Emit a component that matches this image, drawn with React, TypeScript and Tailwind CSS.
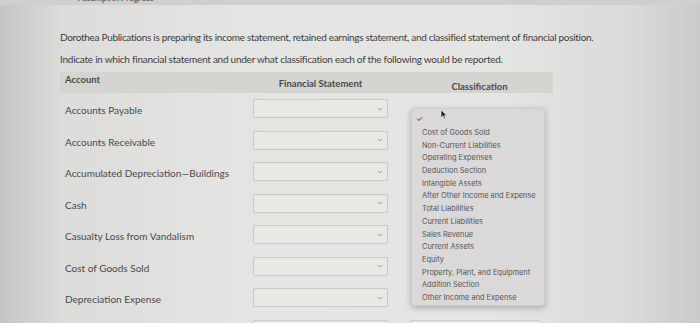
import React from "react";

const accounts = [
  "Accounts Payable",
  "Accounts Receivable",
  "Accumulated Depreciation\u2014Buildings",
  "Cash",
  "Casualty Loss from Vandalism",
  "Cost of Goods Sold",
  "Depreciation Expense",
  "",
];

const options = [
  "Cost of Goods Sold",
  "Non-Current Liabilities",
  "Operating Expenses",
  "Deduction Section",
  "Intangible Assets",
  "After Other Income and Expense",
  "Total Liabilities",
  "Current Liabilities",
  "Sales Revenue",
  "Current Assets",
  "Equity",
  "Property, Plant, and Equipment",
  "Addition Section",
  "Other Income and Expense",
];

function Chevron() {
  return (
    <svg width="6" height="4" viewBox="0 0 6 4" className="shrink-0">
      <path d="M0.8 0.8 L3 3 L5.2 0.8" fill="none" stroke="#9a9a9a" strokeWidth="0.9" />
    </svg>
  );
}

function SelectBox({ w }: { w: string }) {
  return (
    <div className={`${w} h-[19px] border border-[#c9c9c6] bg-[#e8e8e5] rounded-[1px] flex items-center justify-end pr-[4px]`}>
      <Chevron />
    </div>
  );
}

export default function App() {
  return (
    <div
      className="relative w-[700px] h-[323px] overflow-hidden bg-[linear-gradient(90deg,#c4c4c2_0%,#dcdcda_9%,#e4e4e2_35%,#e5e5e3_70%,#dadad8_90%,#cacac8_100%)] text-[#474747]"
      style={{ fontFamily: "Lato, 'Open Sans', sans-serif" }}
    >
      {/* top strip */}
      <div className="h-[5px] bg-[#cfcfcd] overflow-hidden relative">
        <div className="absolute left-[78px] top-[-7px] text-[9px] leading-[10px] font-bold text-[#6a6a6a] tracking-tight">
          Attempt in Progress
        </div>
      </div>

      <div className="pl-[60px] pr-[100px]">
        <p className="mt-[26px] text-[10px] leading-[12px] tracking-[-0.3px] text-[#3e3e3e] whitespace-nowrap">
          Dorothea Publications is preparing its income statement, retained earnings statement, and classified statement of financial position.
        </p>
        <p className="mt-[10px] text-[10px] leading-[12px] tracking-[-0.25px] text-[#3e3e3e] whitespace-nowrap">
          Indicate in which financial statement and under what classification each of the following would be reported.
        </p>

        {/* header */}
        <div className="mt-[7px] w-[493px] h-[21px] bg-[#d4d4d1] flex items-center text-[9.5px] font-bold text-[#4a4a4a]">
          <div className="w-[193px] pl-[5px] -mt-[4px]">Account</div>
          <div className="w-[135px] text-center mt-[4px]">Financial Statement</div>
          <div className="w-[165px] text-center pl-[18px] mt-[9px]">Classification</div>
        </div>

        {/* rows */}
        <div className="flex flex-col">
          {accounts.map((a, i) => (
            <div key={i} className="h-[31.5px] flex items-center">
              <div className="w-[193px] pl-[5px] text-[10px] tracking-[0px] text-[#4a4a4a] mt-[4px]">{a}</div>
              <SelectBox w="w-[135px]" />
              <div className="ml-[22px]">
                {i === accounts.length - 1 && <SelectBox w="w-[130px]" />}
              </div>
            </div>
          ))}
        </div>
      </div>

      {/* open dropdown */}
      <div
        className="absolute left-[411px] top-[108px] w-[134px] h-[198px] bg-[#dad8d8] rounded-[4px] shadow-[0_2px_6px_rgba(0,0,0,0.25)] border border-[#cfcdcd] pl-[10px] pt-[4px] text-[7.4px] text-[#555]"
        style={{ fontFamily: "Inter, 'Liberation Sans', sans-serif" }}
      >
        <div className="h-[14px] -ml-[6px] text-[8px] text-[#444]">✓</div>
        <div className="flex flex-col">
          {options.map((o) => (
            <div key={o} className="h-[12.7px] leading-[12.7px] whitespace-nowrap">
              {o}
            </div>
          ))}
        </div>
      </div>

      {/* cursor */}
      <svg className="absolute left-[440px] top-[109px]" width="8" height="11" viewBox="0 0 8 11">
        <path d="M1 1 L1 8.5 L3 6.8 L4.4 9.8 L5.6 9.3 L4.3 6.4 L6.8 6.4 Z" fill="#222" stroke="#eee" strokeWidth="0.6" />
      </svg>
    </div>
  );
}
